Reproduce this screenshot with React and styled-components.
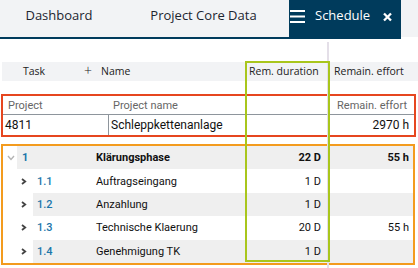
import React from "react";
import styled, { createGlobalStyle } from "styled-components";

const navy = "#003b5c";

const GlobalStyle = createGlobalStyle`
  html, body {
    margin: 0;
    padding: 0;
    background: #fff;
  }
  body {
    font-family: Roboto, "Liberation Sans", sans-serif;
  }
`;

const Page = styled.div`
  position: relative;
  width: 418px;
  height: 268px;
  overflow: hidden;
  background: #fff;
`;

const TabBar = styled.div`
  display: flex;
  align-items: flex-start;
`;

const TabStrip = styled.div`
  display: flex;
  height: 37px;
  background: #f2f3f5;
  border-bottom: 2px solid ${navy};
`;

const TabFiller = styled.div`
  flex: 1;
  height: 37px;
  background: #f2f3f5;
`;

const Tab = styled.div`
  width: ${(p) => p.$w}px;
  box-sizing: border-box;
  padding-top: 6px;
  text-align: center;
  font-family: "Open Sans", "Liberation Sans", sans-serif;
  font-size: 13px;
  line-height: 19px;
  color: #1c2530;
`;

const ActiveTab = styled.div`
  display: flex;
  align-items: flex-start;
  height: 37px;
  padding: 0 9px 0 1px;
  background: ${navy};
  color: #fff;
  font-family: "Open Sans", "Liberation Sans", sans-serif;
  font-size: 13px;
  line-height: 19px;
  svg {
    display: block;
    flex: none;
  }
`;

const TabLabel = styled.span`
  padding-top: 6px;
  margin: 0 13px 0 10px;
`;

const HeaderRow = styled.div`
  display: grid;
  grid-template-columns: 82px 161px 83px 1fr;
  align-items: center;
  height: 19px;
  margin: 23px 0 0 2px;
  padding-bottom: 2px;
  box-sizing: border-box;
  background: #f2f3f5;
  font-family: "Open Sans", "Liberation Sans", sans-serif;
  font-size: 10.5px;
  color: #222;
`;

const HeadCell = styled.div`
  display: flex;
  align-items: center;
  padding-left: ${(p) => p.$pl || 0}px;
  white-space: nowrap;
`;

const Plus = styled.span`
  font-size: 14px;
  font-weight: 300;
  margin-right: 9px;
  line-height: 1;
`;

const ProjectBox = styled.div`
  width: 415px;
  margin: 13px 0 0 1px;
  box-sizing: border-box;
  border: 2px solid #e6461f;
`;

const ProjectRow = styled.div`
  display: grid;
  grid-template-columns: 105px 219px 1fr;
  height: ${(p) => (p.$head ? 19 : 20)}px;
  box-sizing: border-box;
  border-bottom: ${(p) => (p.$head ? "1px solid #8e959c" : "none")};
  font-size: ${(p) => (p.$head ? 11 : 12)}px;
  color: ${(p) => (p.$head ? "#666" : "#111")};
`;

const ProjectCell = styled.div`
  display: flex;
  align-items: center;
  justify-content: ${(p) => (p.$right ? "flex-end" : "flex-start")};
  padding: 0 ${(p) => p.$pr || 0}px 0 ${(p) => p.$pl || 0}px;
  border-left: ${(p) => (p.$divider ? "1px solid #8e959c" : "none")};
  white-space: nowrap;
`;

const TaskBox = styled.div`
  width: 414px;
  margin: 7px 0 0 1px;
  box-sizing: border-box;
  border: 2px solid #f39b1e;
`;

const TaskRow = styled.div`
  display: flex;
  height: 23.4px;
  font-size: 11px;
  font-weight: ${(p) => (p.$bold ? 700 : 400)};
  color: #111;
`;

const Toggle = styled.div`
  flex: none;
  width: ${(p) => (p.$level ? 30 : 14)}px;
  box-sizing: border-box;
  display: flex;
  align-items: center;
  padding-left: ${(p) => (p.$level ? 18 : 4)}px;
`;

const TaskBody = styled.div`
  flex: 1;
  display: grid;
  grid-template-columns: ${(p) => (p.$level ? 63 : 79)}px 1fr 83px 85px;
  align-items: center;
  background: ${(p) => (p.$striped ? "#efefef" : "transparent")};
`;

const TaskId = styled.div`
  padding-left: ${(p) => (p.$level ? 4 : 5)}px;
  color: #1b76aa;
  font-weight: ${(p) => (p.$level ? 500 : 700)};
`;

const TaskName = styled.div`
  white-space: nowrap;
`;

const NumCell = styled.div`
  text-align: right;
  padding-right: ${(p) => p.$pr}px;
`;

const ColumnRule = styled.div`
  position: absolute;
  left: 327px;
  top: 42px;
  bottom: 0;
  width: 2px;
  background: #e4dfe8;
`;

const ColumnHighlight = styled.div`
  position: absolute;
  left: 245px;
  top: 61px;
  width: 85px;
  height: 201px;
  box-sizing: border-box;
  border: 2px solid #a9c61c;
  pointer-events: none;
`;

const Menu = () => (
  <svg width="15" height="37" viewBox="0 0 15 37">
    <rect x="0" y="10" width="15" height="2" fill="#fff" />
    <rect x="0" y="15.5" width="15" height="2" fill="#fff" />
    <rect x="0" y="21" width="15" height="2" fill="#fff" />
  </svg>
);

const Close = () => (
  <svg width="9" height="37" viewBox="0 0 9 37">
    <path d="M1 13.5 L8 20.5 M8 13.5 L1 20.5" stroke="#fff" strokeWidth="2.3" />
  </svg>
);

const ChevronDown = () => (
  <svg width="8" height="6" viewBox="0 0 8 6">
    <path d="M1 1 L4 4.5 L7 1" fill="none" stroke="#b4b4b4" strokeWidth="1.4" />
  </svg>
);

const ChevronRight = () => (
  <svg width="6" height="7" viewBox="0 0 6 7">
    <path d="M1 1 L4.2 3.5 L1 6" fill="none" stroke="#444" strokeWidth="1.8" />
  </svg>
);

const tasks = [
  { id: "1", name: "Klärungsphase", dur: "22 D", eff: "55 h", level: 0 },
  { id: "1.1", name: "Auftragseingang", dur: "1 D", eff: "", level: 1 },
  { id: "1.2", name: "Anzahlung", dur: "1 D", eff: "", level: 1 },
  { id: "1.3", name: "Technische Klaerung", dur: "20 D", eff: "55 h", level: 1 },
  { id: "1.4", name: "Genehmigung TK", dur: "1 D", eff: "", level: 1 },
];

export default function App() {
  return (
    <>
      <GlobalStyle />
      <Page>
        <TabBar>
          <TabStrip>
            <Tab $w={118}>Dashboard</Tab>
            <Tab $w={171}>Project Core Data</Tab>
            <ActiveTab>
              <Menu />
              <TabLabel>Schedule</TabLabel>
              <Close />
            </ActiveTab>
          </TabStrip>
          <TabFiller />
        </TabBar>

        <HeaderRow>
          <HeadCell $pl={21}>Task</HeadCell>
          <HeadCell>
            <Plus>+</Plus>Name
          </HeadCell>
          <HeadCell $pl={4}>Rem. duration</HeadCell>
          <HeadCell $pl={6}>Remain. effort</HeadCell>
        </HeaderRow>

        <ProjectBox>
          <ProjectRow $head>
            <ProjectCell $pl={5}>Project</ProjectCell>
            <ProjectCell $pl={5}>Project name</ProjectCell>
            <ProjectCell $right $pr={7}>Remain. effort</ProjectCell>
          </ProjectRow>
          <ProjectRow>
            <ProjectCell $pl={2}>4811</ProjectCell>
            <ProjectCell $divider $pl={2}>Schleppkettenanlage</ProjectCell>
            <ProjectCell $right $pr={5}>2970 h</ProjectCell>
          </ProjectRow>
        </ProjectBox>

        <TaskBox>
          {tasks.map((t, i) => (
            <TaskRow key={t.id} $bold={t.level === 0}>
              <Toggle $level={t.level}>
                {t.level ? <ChevronRight /> : <ChevronDown />}
              </Toggle>
              <TaskBody $level={t.level} $striped={i % 2 === 0}>
                <TaskId $level={t.level}>{t.id}</TaskId>
                <TaskName>{t.name}</TaskName>
                <NumCell $pr={7}>{t.dur}</NumCell>
                <NumCell $pr={4}>{t.eff}</NumCell>
              </TaskBody>
            </TaskRow>
          ))}
        </TaskBox>

        <ColumnRule />
        <ColumnHighlight />
      </Page>
    </>
  );
}
